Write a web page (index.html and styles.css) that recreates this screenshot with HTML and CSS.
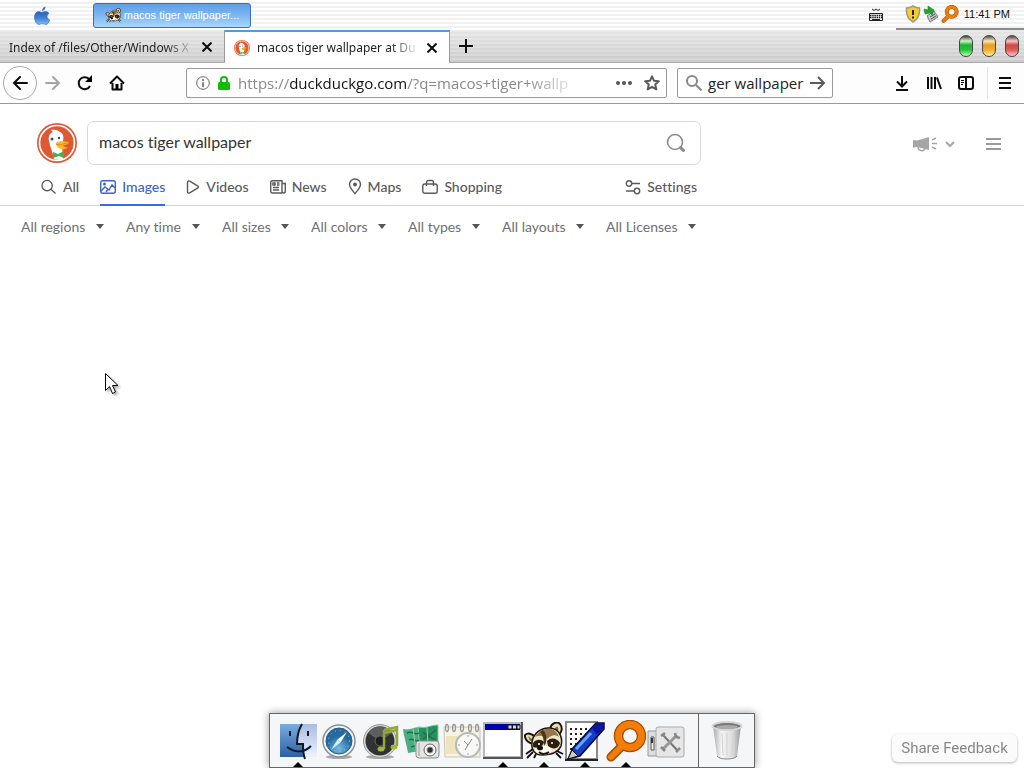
FILE: index.html
```html
<!DOCTYPE html>
<html lang="en">
<head>
  <meta charset="UTF-8">
  <meta name="viewport" content="width=device-width, initial-scale=1.0">
  <title>macos tiger wallpaper at DuckDuckGo</title>
  <link rel="stylesheet" href="styles.css">
</head>
<body>

  <!-- Menu bar -->
  <header class="menubar">
    <button class="apple" aria-label="Apple menu">
      <svg width="18" height="20" viewBox="0 0 18 20"><defs><linearGradient id="aqua" x2="0" y2="1"><stop offset="0" stop-color="#2a62b4"/><stop offset=".5" stop-color="#3b82d6"/><stop offset="1" stop-color="#7cc0fa"/></linearGradient></defs><path fill="url(#aqua)" stroke="#3165ad" stroke-width=".6" d="M9 6.500c1-.3 2-1 3.500-1 1.500 0 2.800.7 3.500 1.800-2.800 1.800-2.500 5.200.7 6.600C16 16 14.500 18.500 13 18.500c-1.300 0-1.800-.7-3.500-.7s-2.200.7-3.500.7C3.500 18.500 1.500 14.500 1.500 11.200c0-3.400 2-5.600 4.500-5.600 1.300 0 2.200.9 3 .9z"/><path fill="#3a77c8" d="M9 5c0-2.300 1.500-4 3.500-4.400C12.600 3 11.200 4.800 9 5z"/></svg>
    </button>
    <button class="task">
      <svg width="17" height="15" viewBox="0 0 40 38"><use href="#raccoon"/></svg>
      <span>macos tiger wallpaper...</span>
    </button>
    <button class="keyboard" aria-label="Keyboard">
      <svg width="14" height="14" viewBox="0 0 14 14" fill="none" stroke="#222"><path d="M3 1l2 1.500 2-1.500 2 1.500 2-1.500"/><path d="M.5 5.500h13v7H.5z"/><path stroke-width="1.500" stroke-dasharray="1.500 .7" d="M1 7.500h12M1 9.500h12"/><path d="M3 11.500h8"/></svg>
    </button>
    <div class="tray">
      <svg width="16" height="18" viewBox="0 0 16 18"><path d="M8 1c2 1.300 4 2 6.500 2 .5 6-1 11-6.500 14C2.500 14 1 9 1.500 3 4 3 6 2.300 8 1z" fill="#f7cf20" stroke="#999" stroke-width="1.500"/><path d="M8 5v5M8 11.500v2" stroke="#222" stroke-width="2"/></svg>
      <svg width="16" height="18" viewBox="0 0 16 18"><path d="M4 11l7-5 4 6-8 5z" fill="#c4c7ca" stroke="#777"/><path d="M7 12l5-3M8 14l5-3" stroke="#555"/><path d="M1 4l4 1V1l6 4-2 5-2-2-5 1z" fill="#25a52e" stroke="#167a20" stroke-width=".6"/></svg>
      <svg width="18" height="18" viewBox="0 0 40 42"><use href="#lens"/></svg>
      <time>11:41 PM</time>
    </div>
  </header>

  <!-- Tabs -->
  <div class="tabs">
    <div class="tab">
      <span class="tab-title">Index of /files/Other/Windows X</span>
      <button aria-label="Close tab"><svg width="10" height="10" viewBox="0 0 10 10"><path class="ink" d="M.5.5l9 9m0-9l-9 9"/></svg></button>
    </div>
    <div class="tab active">
      <svg class="favicon" width="16" height="16" viewBox="0 0 40 40"><use href="#duck"/></svg>
      <span class="tab-title">macos tiger wallpaper at Du</span>
      <button aria-label="Close tab"><svg width="10" height="10" viewBox="0 0 10 10"><path class="ink" d="M.5.5l9 9m0-9l-9 9"/></svg></button>
    </div>
    <button class="new-tab" aria-label="New tab"><svg width="14" height="14" viewBox="0 0 14 14"><path class="ink" d="M7 0v14M0 7h14"/></svg></button>
    <div class="lights">
      <button class="green" aria-label="Minimize"></button>
      <button class="amber" aria-label="Zoom"></button>
      <button class="red" aria-label="Close"></button>
    </div>
  </div>

  <!-- Toolbar -->
  <nav class="toolbar">
    <button class="back" aria-label="Back"><svg width="16" height="14" viewBox="0 0 16 14"><path class="ink" d="M15 7H2M8 1L2 7l6 6" stroke-linecap="round"/></svg></button>
    <button class="tool" aria-label="Forward"><svg width="16" height="14" viewBox="0 0 16 14"><path class="ink pale" d="M1 7h13M8 1l6 6-6 6" stroke-linecap="round"/></svg></button>
    <button class="tool" aria-label="Reload"><svg width="16" height="16" viewBox="0 0 16 16"><path class="ink" d="M13 11a6 6 0 1 1-.5-6.500"/><path d="M15 0v7H8z"/></svg></button>
    <button class="tool" aria-label="Home"><svg width="16" height="16" viewBox="0 0 16 16"><path class="ink" d="M1 8.500L8 1.500l7 7M3.500 8v6.500h9V8" stroke-linejoin="round"/><path d="M6.500 9h3v6h-3z"/></svg></button>

    <div class="address">
      <svg width="14" height="14" viewBox="0 0 14 14"><circle cx="7" cy="7" r="6.300" fill="none" stroke="#666"/><path d="M7 3v2M7 6.200V11" stroke="#666" stroke-width="1.600"/></svg>
      <svg width="12" height="14" viewBox="0 0 12 14"><rect y="6" width="12" height="8" rx="1.500" fill="#12bc00"/><path d="M3 7V4a3 3 0 0 1 6 0v3" fill="none" stroke="#12bc00" stroke-width="2"/></svg>
      <a class="url" href="#results">https://<b>duckduckgo.com</b>/?q=macos+tiger+wallp</a>
      <button aria-label="Page actions"><svg width="16" height="4" viewBox="0 0 16 4" fill="#555"><circle cx="2" cy="2" r="2"/><circle cx="8" cy="2" r="2"/><circle cx="14" cy="2" r="2"/></svg></button>
      <button aria-label="Bookmark"><svg width="16" height="16" viewBox="0 0 16 16"><path class="ink grey" stroke-linejoin="round" d="M8 1.300l2 4.400 4.800.5-3.600 3.200 1.100 4.900L8 11.800l-4.300 2.500 1.100-4.900L1.200 6.200 6 5.700z"/></svg></button>
    </div>
    <form class="quick">
      <svg width="16" height="16" viewBox="0 0 16 16"><path class="ink mid" d="M10 10l5.500 5.500"/><circle class="ink mid" cx="6" cy="6" r="5"/></svg>
      <input type="text" value="ger wallpaper" aria-label="Search">
      <button aria-label="Go"><svg width="16" height="14" viewBox="0 0 16 14"><path class="ink grey" d="M0 7h14M8 1l6 6-6 6"/></svg></button>
    </form>

    <div class="tools-right">
      <button class="tool" aria-label="Downloads"><svg width="14" height="16" viewBox="0 0 14 16"><path class="ink" d="M7 1v10M2 6.500l5 5 5-5M1 15h12"/></svg></button>
      <button class="tool" aria-label="Library"><svg width="16" height="16" viewBox="0 0 16 16"><path class="ink" d="M2 2v12M5.500 2v12M9 2v12M11 2.500l4 11.500"/></svg></button>
      <button class="tool" aria-label="Sidebars"><svg width="16" height="14" viewBox="0 0 16 14"><rect class="ink" x="1" y="1" width="14" height="12" rx="2"/><path class="ink" d="M8 1v12"/><path d="M3 4.500h3M3 6.500h3M3 8.500h2" stroke="#000"/></svg></button>
      <button class="tool menu" aria-label="Menu"><svg width="12" height="12" viewBox="0 0 12 12"><path class="ink" d="M0 1h12M0 6h12M0 11h12"/></svg></button>
    </div>
  </nav>

  <!-- Search page -->
  <main id="results">
    <div class="search-head">
      <div class="search-row">
        <a class="logo" href="#" aria-label="DuckDuckGo"><svg width="40" height="40" viewBox="0 0 40 40"><use href="#duck"/></svg></a>
        <form class="search">
          <input type="text" value="macos tiger wallpaper" aria-label="Search the web">
          <button aria-label="Search"><svg width="20" height="20" viewBox="0 0 20 20" fill="none" stroke="#8a8a8a"><circle cx="9" cy="9" r="7.500" stroke-width="1.600"/><path d="M14.500 14.500l3 3" stroke-width="3" stroke-linecap="round"/></svg></button>
        </form>
        <div class="head-menu">
          <button class="horn" aria-label="Announcements">
            <svg width="26" height="18" viewBox="0 0 26 18"><path d="M1 5l4 .5L17 2v13l-6-1.500L5 12l-4 .5z" fill="#a6a6a6"/><path d="M6 12c0 4 6 5 7 1.500M20 5l4-2M20 8.500h5M20 12l4 2" fill="none" stroke="#a6a6a6" stroke-width="1.500"/></svg>
            <svg width="10" height="7" viewBox="0 0 10 7"><path d="M1 1l4 4 4-4" fill="none" stroke="#a6a6a6" stroke-width="2"/></svg>
          </button>
          <button aria-label="Main menu"><svg width="15" height="14" viewBox="0 0 15 14"><path d="M0 2h15M0 7h15M0 12h15" stroke="#999" stroke-width="2"/></svg></button>
        </div>
      </div>

      <div class="verticals">
        <a href="#"><svg width="16" height="16" viewBox="0 0 17 16"><circle cx="6.500" cy="6.500" r="5.500"/><path d="M10.500 10.500l5 4.500"/></svg>All</a>
        <a href="#" class="current"><svg width="16" height="16" viewBox="0 0 16 16"><rect x=".7" y="1.700" width="14.600" height="12.600" rx="2"/><path d="M1 12l4-4 4 3 3-5 3 3M6 13l2-3"/><circle cx="4.500" cy="5" r=".8"/></svg>Images</a>
        <a href="#"><svg width="14" height="16" viewBox="0 0 14 16"><path d="M1.500 3.500v9c0 1.500 1 2 2.200 1.300l7.800-4.600c1.200-.7 1.200-1.700 0-2.400L3.700 2.200C2.500 1.500 1.500 2 1.500 3.500z"/></svg>Videos</a>
        <a href="#"><svg width="16" height="16" viewBox="0 0 16 16"><path d="M12 14H2.500A1.800 1.800 0 0 1 .7 12.200V3.500A1.800 1.800 0 0 1 2.500 1.700H12V12c0 2.700 3.300 2.700 3.300 0V4.500H12M3 11h6M3 8.500h6M3 4h2v2H3zM7 4h2.500M7 6h2.500"/></svg>News</a>
        <a href="#"><svg width="14" height="17" viewBox="0 0 14 17"><path d="M7 15.500C4 12 1.500 9.500 1.500 6.500a5.500 5.500 0 0 1 11 0c0 3-2.500 5.500-5.500 9z"/><circle cx="7" cy="6.500" r="1.200" fill="#555"/></svg>Maps</a>
        <a href="#"><svg width="16" height="16" viewBox="0 0 16 16"><rect x=".8" y="5" width="14.400" height="9.300" rx="2"/><path d="M4.500 7V3.500a2 2 0 0 1 2-2h3a2 2 0 0 1 2 2V7"/></svg>Shopping</a>
        <a href="#" class="settings"><svg width="16" height="16" viewBox="0 0 16 16"><circle cx="4" cy="4.500" r="2.700"/><circle cx="12" cy="12" r="2.700"/><path d="M7 4.500h8M1 12h8"/></svg>Settings</a>
      </div>
    </div>

    <div class="filters">
      <label><select aria-label="Region"><option>All regions</option></select></label>
      <label><select aria-label="Time"><option>Any time</option></select></label>
      <label><select aria-label="Size"><option>All sizes</option></select></label>
      <label><select aria-label="Color"><option>All colors</option></select></label>
      <label><select aria-label="Type"><option>All types</option></select></label>
      <label><select aria-label="Layout"><option>All layouts</option></select></label>
      <label><select aria-label="License"><option>All Licenses</option></select></label>
    </div>
  </main>

  <button class="feedback">Share Feedback</button>

  <!-- Dock -->
  <div class="dock">
    <button class="running" aria-label="Finder"><svg width="40" height="40" viewBox="0 0 40 40"><defs><linearGradient id="finderL" x2="0" y2="1"><stop offset="0" stop-color="#78aee0"/><stop offset="1" stop-color="#2c5fa4"/></linearGradient><linearGradient id="finderR" x2="0" y2="1"><stop offset="0" stop-color="#a9bce0"/><stop offset="1" stop-color="#edf3fc"/></linearGradient></defs><path fill="url(#finderL)" d="M2 3h37v33H2z"/><path fill="url(#finderR)" d="M24 3h15v33H26l-1-12h-6c0-9 2-16 5-21z"/><path d="M24 3c-3 5-5 12-5 20h6c0 6 0 10 2 15M9 26c8 6 17 6 24-1M12 10v5M30 10v5" fill="none" stroke="#101828" stroke-width="2"/></svg></button>
    <button aria-label="Safari"><svg width="40" height="40" viewBox="0 0 40 40"><defs><radialGradient id="sea" cy=".8"><stop offset="0" stop-color="#74bde3"/><stop offset="1" stop-color="#24699f"/></radialGradient></defs><ellipse cx="20" cy="36" rx="13" ry="2" fill="#aaa"/><circle cx="20" cy="20" r="16" fill="#f4f4f4" stroke="#8b8f93" stroke-width="1.500"/><circle cx="20" cy="20" r="13" fill="url(#sea)" stroke="#276089"/><circle cx="20" cy="20" r="10.500" fill="none" stroke="#9cc9e4" stroke-dasharray="1 4"/><path d="M28 11l-6.500 10.500-3-3z" fill="#fff"/><path d="M12 29l6.500-10.500 3 3z" fill="#d9ebf5"/></svg></button>
    <button aria-label="iTunes"><svg width="40" height="40" viewBox="0 0 40 40"><ellipse cx="20" cy="36" rx="14" ry="2" fill="#aaa"/><circle cx="20" cy="20" r="16.500" fill="#d5d5d5" stroke="#999"/><circle cx="20" cy="20" r="14.500" fill="#303234"/><path d="M8 12a14 14 0 0 1 24 0L20 20z" fill="#5c5e60"/><circle cx="20" cy="20" r="5" fill="#1d1e1f" stroke="#666"/><path d="M24 9l13-3v19M24 9v19M24 12l13-3" fill="none" stroke="#94a53a" stroke-width="2.500"/><ellipse cx="21" cy="28" rx="3.500" ry="2.500" fill="#a3b63c"/><ellipse cx="34" cy="26" rx="3.500" ry="2.500" fill="#a3b63c"/></svg></button>
    <button aria-label="iPhoto"><svg width="40" height="40" viewBox="0 0 40 40"><path d="M2 8c8 2 12-3 20-2l2 23-17 3c-1-8-4-15-5-24z" fill="#4bae80"/><path d="M17 6c7 2 13-2 20-2v23l-18 3z" fill="#27905f" stroke="#86c8a5"/><path d="M6 12c5-3 8 3 12 0M8 19c4-3 6 3 10 0M10 26l7-2M22 11l5 4 8-6M22 18l5-3 8 4" fill="none" stroke="#1c704d" stroke-width="1.500"/><path d="M12 7l3 24M26 6l1 20" stroke="#95d3b2"/><rect x="15" y="20" width="23" height="17" rx="3" fill="#e4e5e3" stroke="#8b8d8b"/><path d="M18 22v13" stroke="#999"/><circle cx="29" cy="29" r="6" fill="#f7f7f7" stroke="#666"/><circle cx="29" cy="29" r="3" fill="#333" stroke="#888"/></svg></button>
    <button aria-label="Calendar"><svg width="40" height="40" viewBox="0 0 40 40"><path d="M2 6h36v30H3z" fill="#f7f4e6" stroke="#c9c5b5"/><path d="M4 15h20v18H4z" fill="#eee5bd"/><g fill="none" stroke="#999" stroke-width="1.300"><ellipse cx="5" cy="7" rx="1.500" ry="3.500"/><ellipse cx="12" cy="7" rx="1.500" ry="3.500"/><ellipse cx="20" cy="7" rx="1.500" ry="3.500"/><ellipse cx="28" cy="7" rx="1.500" ry="3.500"/><ellipse cx="35" cy="7" rx="1.500" ry="3.500"/></g><circle cx="26" cy="24" r="12" fill="#f8f8f6" stroke="#b8b8b5" stroke-width="2"/><path d="M22 20l4 4 4-6M26 24l-3 5" fill="none" stroke="#888"/><path d="M26 14v2M26 32v2M16 24h2M34 24h2" stroke="#999"/></svg></button>
    <button class="running" aria-label="Window"><svg width="40" height="40" viewBox="0 0 40 40"><path d="M0 1h40v37H0z" fill="#555"/><path d="M0 1h38v35H0z" fill="#b8b8b8"/><path d="M2 3h35v32H2z" fill="#fff"/><path d="M2 3h35v6H2z" fill="#00a"/><path d="M25 4h4v4h-4zM29.500 4h4v4h-4zM34 4h3v4h-3z" fill="#ddd" stroke="#111"/></svg></button>
    <button class="running" aria-label="Raccoon"><svg width="40" height="38" viewBox="0 0 40 38"><g id="raccoon"><path d="M11 15C6 10 0 11 1 15s4 6 8 7M26 7c1-6 7-8 10-5 3 4 2 9-3 12" fill="#e8dcb8" stroke="#211609" stroke-width="2"/><path d="M30 8c1-3 3-4 4-3 1 3 0 5-2 7zM4 14l5 4-3 1z" fill="#7c6743"/><path d="M8 20C9 12 17 5 26 6c10 1 13 10 11 18-3 7-10 9-19 9C10 33 7 27 8 20z" fill="#f3e6c3" stroke="#211609" stroke-width="1.500"/><path d="M11 15c4-6 10-9 16-8 4 1 7 4 8 8-4-3-8-2-12 2-4-4-8-4-12-2z" fill="#94764a"/><path d="M19 8c3 3 4 7 3 13l-2 3c0-6-1-11-4-14z" fill="#4b351c"/><path d="M9 21c3-4 8-4 11-1-1 5-6 7-11 5zM23 19c4-4 10-3 13 2-1 6-7 7-12 3z" fill="#2b1d10"/><circle cx="15" cy="22" r="1" fill="#fff"/><circle cx="28" cy="21" r="1" fill="#fff"/><path d="M11 28c4-6 14-5 17 0-3 6-13 7-17 0z" fill="#fffbed"/><ellipse cx="16" cy="26" rx="3" ry="2.300" fill="#111"/><path d="M9 27l-7 5M9 30l-6 6M12 32l-2 4M33 29l6 3M32 31l5 5M15 30c3 3 7 2 10 0" fill="none" stroke="#111" stroke-width="1.800"/></g></svg></button>
    <button class="running" aria-label="Notes"><svg width="40" height="40" viewBox="0 0 40 40"><path d="M1 1h31v37H1z" fill="#fff" stroke="#8a8a8a" stroke-width="2"/><path d="M0 39h33" stroke="#222" stroke-width="2"/><path d="M5 8h24M5 13h21M5 18h16M5 23h12M5 28h8" stroke="#222" stroke-width="2" stroke-dasharray="2 3"/><path d="M3 38l5-11L31 2h8v6L15 35z" fill="#163dc8" stroke="#08083f" stroke-width="1.500"/><path d="M11 28L26 12" stroke="#61a4fb" stroke-width="3"/><path d="M27 7l4-4h7v5l-6 6z" fill="#1015a0"/><path d="M3 38l4-9 6 6z" fill="#ccc" stroke="#111"/></svg></button>
    <button class="running" aria-label="Magnifier"><svg width="40" height="42" viewBox="0 0 40 42"><g id="lens" fill="none" stroke-linecap="round"><path d="M16 26L5 37" stroke="#a44d00" stroke-width="9"/><circle cx="24" cy="16" r="11.500" stroke="#a44d00" stroke-width="9.500"/><path d="M17 25L5 37" stroke="#f47d09" stroke-width="6"/><circle cx="24" cy="16" r="11.500" stroke="#f47d09" stroke-width="7"/></g></svg></button>
    <button aria-label="System tools"><svg width="40" height="40" viewBox="0 0 40 40"><path d="M1 10h9v25H1z" fill="#ddd" stroke="#999"/><path d="M4 16h3v13H4z" fill="#eee" stroke="#555"/><path d="M5 17v5" stroke="#333" stroke-width="2"/><rect x="9" y="6" width="28" height="30" rx="2" fill="#e6e6e6" stroke="#aaa"/><path d="M16 14l15 16" stroke="#777" stroke-width="2"/><path d="M30 14L16 28" stroke="#999" stroke-width="3"/><path d="M14 15l4-3M28 12l1 4 4 1M29 31l4-4M14 26l4 4" fill="none" stroke="#888" stroke-width="2.500"/></svg></button>
    <button class="trash" aria-label="Trash"><svg width="40" height="42" viewBox="0 0 40 42"><defs><linearGradient id="bin"><stop offset="0" stop-color="#aaa"/><stop offset=".3" stop-color="#f5f5f5"/><stop offset=".7" stop-color="#ddd"/><stop offset="1" stop-color="#999"/></linearGradient></defs><path d="M6 6l4 30c2 4 18 4 20 0l4-30z" fill="url(#bin)"/><path d="M15 13l1 22M20 13v23M26 13l-1 22" stroke="#d2d2d2"/><ellipse cx="20" cy="6" rx="14.500" ry="4" fill="#777" stroke="#d5d5d5" stroke-width="2"/><ellipse cx="20" cy="7" rx="11" ry="2" fill="#aaa"/><path d="M10 36c2 4 18 4 20 0" fill="none" stroke="#888"/></svg></button>
  </div>

  <svg class="cursor" width="16" height="24" viewBox="0 0 16 24"><path d="M.5.5v17l4-4 3 7 3-1.500-3-6.500H13z" fill="#fff" stroke="#000"/></svg>

  <!-- Shared artwork -->
  <svg class="shared" width="0" height="0">
    <symbol id="duck" viewBox="0 0 40 40"><circle cx="20" cy="20" r="20" fill="#de5833"/><circle cx="20" cy="20" r="17.500" fill="none" stroke="#fff" stroke-width="1.700"/><path d="M17 36c-1-6-4-12-5-18-1-5 1-8 4-9l-2-2c4-1 10 1 12 5 1 3 0 7-1 10l1 14c-3 1-6 1-9 0z" fill="#fff"/><path d="M19 20c4-3 8-1 13-1-1 3-5 3-7 4 3 1 5 1 5 2-5 3-11 0-11-5z" fill="#fdb92a"/><path d="M19 21c4 2 8-1 12-1" stroke="#e08b13" fill="none"/><circle cx="15" cy="16" r="1.500" fill="#2d4f8e"/><circle cx="22" cy="15" r="1.200" fill="#2d4f8e"/><path d="M16 29l5 2 6-3v7l-5-2-6 2z" fill="#4cae4c"/></symbol>
  </svg>

</body>
</html>
```
FILE: styles.css
```css
* {
  box-sizing: border-box;
}
body {
  margin: 0;
  min-height: 100vh;
  background: #fff;
  color: #222;
  font-family: "Open Sans", "Noto Sans", sans-serif;
}
button {
  display: flex;
  align-items: center;
  justify-content: center;
  padding: 0;
  border: 0;
  background: none;
  font: inherit;
  color: inherit;
}
input {
  min-width: 0;
  padding: 0;
  border: 0;
  outline: 0;
  background: none;
  font: inherit;
  color: inherit;
}
a {
  color: inherit;
  text-decoration: none;
}
svg {
  flex: none;
}
.ink {
  fill: none;
  stroke: #0c0c0d;
  stroke-width: 2;
}
.pale {
  stroke: #a5a5a5;
}
.mid {
  stroke: #888;
}
.grey {
  stroke: #5a5a5a;
}
.shared {
  position: absolute;
}

/* menu bar */
.menubar {
  display: flex;
  align-items: center;
  height: 30px;
  background: repeating-linear-gradient(#fff 0, #fff 2px, #f1f1f1 2px, #f1f1f1 4px);
}
.apple {
  width: 18px;
  margin: 2px 42px 0 33px;
}
.task {
  gap: 2px;
  width: 158px;
  height: 25px;
  border: 1px solid #3b6fb5;
  border-radius: 3px;
  background: linear-gradient(#5f9fe6, #7db6f1 50%, #a9d7fd);
  color: #fff;
  font-family: "Liberation Sans", sans-serif;
  font-size: 11px;
}
.keyboard {
  margin: 0 13px 0 auto;
}
.tray {
  display: flex;
  align-items: center;
  gap: 2px;
  height: 30px;
  padding: 0 14px 0 9px;
  border-bottom: 2px solid #8b8b8b;
  color: #111;
}
.tray time {
  margin-left: 3px;
  font-family: "Liberation Sans", sans-serif;
  font-size: 11px;
}

/* tabs */
.tabs {
  display: flex;
  height: 33px;
  background: repeating-linear-gradient(rgba(255, 255, 255, .2) 0, rgba(255, 255, 255, .2) 2px, transparent 2px, transparent 4px), linear-gradient(#e6e6e6, #cbcbcb);
  border-bottom: 1px solid #aaa;
}
.tab {
  display: flex;
  align-items: center;
  gap: 7px;
  width: 225px;
  padding: 2px 12px 0 9px;
  border-right: 1px solid #999;
  font-family: "Noto Sans", "Open Sans", sans-serif;
  font-size: 12px;
}
.tab-title {
  flex: 1;
  overflow: hidden;
  white-space: nowrap;
  -webkit-mask-image: linear-gradient(to left, transparent, #000 30px);
  mask-image: linear-gradient(to left, transparent, #000 30px);
}
.tab.active {
  height: 33px;
  padding-top: 0;
  border-top: 2px solid #4a9ee0;
  background: #fff;
}
.new-tab {
  width: 32px;
}
.lights {
  display: flex;
  align-items: center;
  gap: 9px;
  margin-left: auto;
  padding-right: 5px;
}
.lights button {
  width: 14px;
  height: 22px;
  border: 1px solid #444;
  border-radius: 7px;
}
.green {
  background: linear-gradient(#444, #cdf5cd 25%, #1eb432 45%, #2ac23c 70%, #b8ffb8);
}
.amber {
  background: linear-gradient(#554, #fbe7bd 25%, #ec9c1c 45%, #f2ad32 70%, #fff0a8);
}
.red {
  background: linear-gradient(#544, #f5c8c8 25%, #d24545 45%, #dd5a5a 70%, #ffc8c8);
}

/* toolbar */
.toolbar {
  display: flex;
  align-items: center;
  height: 41px;
  padding: 0 3px;
  border-bottom: 1px solid #999;
  background: #fdfdfd;
}
.back {
  width: 34px;
  height: 34px;
  border: 1px solid #aaa;
  border-radius: 50%;
}
.tool {
  width: 32px;
  height: 32px;
}
.address,
.quick {
  display: flex;
  align-items: center;
  height: 30px;
  border: 1px solid #999;
  border-radius: 2px;
  background: #fff;
  font-size: 15px;
}
.address {
  flex: 1;
  min-width: 0;
  gap: 8px;
  margin: 0 10px 0 53px;
  padding: 0 6px 0 9px;
}
.address button {
  margin-left: 4px;
}
.url {
  flex: 1;
  overflow: hidden;
  color: #888;
  white-space: nowrap;
  -webkit-mask-image: linear-gradient(to left, transparent 20px, #000 80px);
  mask-image: linear-gradient(to left, transparent 20px, #000 80px);
}
.url b {
  color: #111;
  font-weight: normal;
}
.quick {
  gap: 6px;
  width: 156px;
  margin: 0 53px 0 0;
  padding: 0 6px 0 8px;
}
.quick input {
  flex: 1;
}
.tools-right {
  display: flex;
}
.menu {
  width: 34px;
  margin-left: 5px;
  border-left: 1px solid #e5e5e5;
}

/* search page */
main {
  font-family: Lato, "Open Sans", sans-serif;
  font-variant-ligatures: none;
}
.search-head {
  padding: 17px 23px 0 37px;
  border-bottom: 1px solid #d5d5d5;
}
.search-row {
  display: flex;
  align-items: center;
}
.logo {
  display: flex;
}
.search {
  display: flex;
  flex: 1;
  max-width: 614px;
  height: 44px;
  margin-left: 10px;
  padding: 0 14px 0 11px;
  border: 1px solid #d8d8d8;
  border-radius: 7px;
  color: #333;
  font-size: 16px;
}
.search input {
  flex: 1;
  padding-bottom: 3px;
}
.head-menu {
  display: flex;
  gap: 31px;
  margin-left: auto;
  padding-top: 2px;
}
.horn {
  gap: 7px;
}
.verticals {
  display: flex;
  align-items: flex-start;
  gap: 21px;
  max-width: 664px;
  height: 40px;
  padding: 4px 4px 0;
  color: #5a5a5a;
  font-size: 14px;
  font-weight: 500;
}
.verticals a {
  display: flex;
  align-items: center;
  gap: 6px;
  height: 37px;
  border-bottom: 2px solid transparent;
}
.verticals svg {
  fill: none;
  stroke: currentColor;
  stroke-width: 1.400;
}
.verticals .current {
  border-color: #3969ef;
  color: #3f62c8;
}
.verticals .settings {
  margin-left: auto;
}
.filters {
  display: flex;
  gap: 22px;
  padding: 12px 21px;
  color: #707070;
  font-size: 14px;
}
.filters label {
  display: flex;
  align-items: center;
  gap: 10px;
}
.filters label::after {
  content: "";
  border: 4px solid transparent;
  border-top: 5px solid #555;
  border-bottom: 0;
}
.filters select {
  padding: 0;
  border: 0;
  background: none;
  color: inherit;
  font: inherit;
  -webkit-appearance: none;
  appearance: none;
}
.feedback {
  position: fixed;
  right: 7px;
  bottom: 6px;
  width: 125px;
  height: 28px;
  border-radius: 6px;
  background: #fbfbfb;
  box-shadow: 0 1px 3px rgba(0, 0, 0, .3);
  color: #888;
  font-family: Roboto, sans-serif;
  font-size: 15px;
}

/* dock */
.dock {
  position: fixed;
  bottom: 0;
  left: 50%;
  display: flex;
  height: 55px;
  padding: 0 7px;
  border: 1px solid #666;
  background: #f5f6f8;
  box-shadow: 0 0 8px rgba(0, 0, 0, .4);
  transform: translateX(-50%);
}
.dock button {
  position: relative;
  width: 41px;
}
.dock .trash {
  width: 49px;
  margin-left: 11px;
  padding-left: 8px;
  border-left: 1px solid #666;
}
.running::after {
  content: "";
  position: absolute;
  bottom: 0;
  left: 16px;
  border: 5px solid transparent;
  border-top: 0;
  border-bottom-color: #000;
}
.cursor {
  position: fixed;
  top: 373px;
  left: 105px;
  filter: drop-shadow(2px 2px 1px rgba(0, 0, 0, .3));
}
```
